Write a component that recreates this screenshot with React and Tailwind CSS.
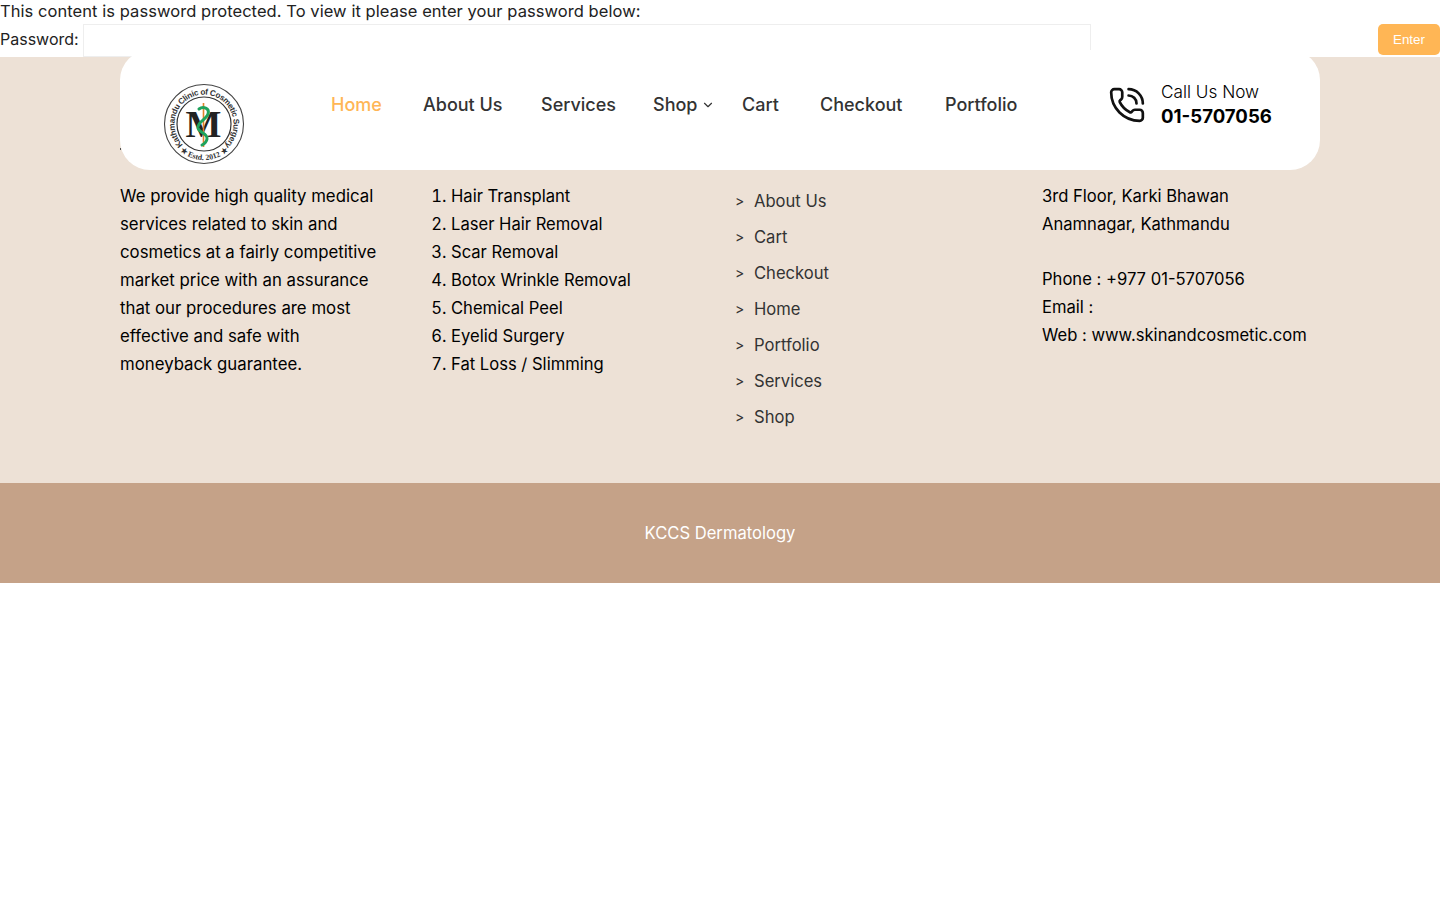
import { ChevronDown, PhoneCall } from 'lucide-react'

const font = { fontFamily: 'Inter, sans-serif' }

const navLinks = [
  { label: 'Home', width: 'w-[92px]', active: true },
  { label: 'About Us', width: 'w-[118px]' },
  { label: 'Services', width: 'w-[112px]' },
  { label: 'Shop', width: 'w-[89px]', caret: true },
  { label: 'Cart', width: 'w-[78px]' },
  { label: 'Checkout', width: 'w-[125px]' },
  { label: 'Portfolio', width: 'w-[80px]' },
]

const treatments = [
  'Hair Transplant',
  'Laser Hair Removal',
  'Scar Removal',
  'Botox Wrinkle Removal',
  'Chemical Peel',
  'Eyelid Surgery',
  'Fat Loss / Slimming',
]

const pages = ['About Us', 'Cart', 'Checkout', 'Home', 'Portfolio', 'Services', 'Shop']

function Logo() {
  return (
    <svg width="82" height="82" viewBox="0 0 82 82" className="block">
      <defs>
        <path id="ring-top" d="M20.1 61.9 A29.5 29.5 0 1 1 61.9 61.9" />
        <path id="ring-bottom" d="M15.5 66.5 A36 36 0 0 0 66.5 66.5" />
      </defs>
      <circle cx="41" cy="41" r="39.5" fill="none" stroke="#444" strokeWidth="1.1" />
      <circle cx="41" cy="41" r="27" fill="none" stroke="#333" strokeWidth="1.2" />
      <text fontSize="8.2" fontWeight="700" fill="#333" fontFamily="Liberation Sans, sans-serif">
        <textPath href="#ring-top" textLength="139" lengthAdjust="spacing">Kathmandu Clinic of Cosmetic Surgery</textPath>
      </text>
      <text fontSize="7.8" fontWeight="700" fill="#333" fontFamily="Liberation Serif, serif" textAnchor="middle">
        <textPath href="#ring-bottom" startOffset="50%">★ Estd. 2012 ★</textPath>
      </text>
      <text x="40.5" y="54" textAnchor="middle" fontSize="38" fontWeight="700" fill="#222" fontFamily="Liberation Serif, serif">M</text>
      <line x1="40.5" y1="20" x2="40.5" y2="64" stroke="#e0812b" strokeWidth="1.6" />
      <path d="M36 26 c4 -3 11 -1 9 5 c-2 6 -11 8 -10 14 c1 5 10 5 9 11 c-.5 3 -3 5 -5 6" fill="none" stroke="#1fa35c" strokeWidth="3" strokeLinecap="round" />
    </svg>
  )
}

export default function App() {
  return (
    <div className="relative min-h-[900px] bg-white text-[#222]" style={font}>
      <div className="mb-[2px] text-[16.5px] leading-[22px] tracking-[0.06px]">
        This content is password protected. To view it please enter your password below:
      </div>
      <form className="flex h-[33px] items-start justify-between">
        <label className="flex items-start text-[16px] leading-[30px]">
          <span className="w-[83px]">Password:</span>
          <input type="password" className="h-[33px] w-[1008px] border border-[#eeeeee] bg-white" />
        </label>
        <button type="button" className="h-[31px] w-[62px] rounded-[5px] bg-[#ffb655] text-[13.33px] text-white" style={{ fontFamily: 'Liberation Sans, sans-serif' }}>
          Enter
        </button>
      </form>

      <span className="absolute left-[120px] top-[148px] h-[2px] w-[1px] bg-[#555]" />

      <header className="absolute left-[120px] top-[50px] z-10 flex h-[120px] w-[1200px] items-start rounded-[30px] bg-white">
        <div className="ml-[43px] mt-[33px] w-[168px] shrink-0">
          <Logo />
        </div>
        <nav className="mt-[42px] flex items-center text-[18px] font-medium leading-[26px] text-[#333]">
          {navLinks.map((link) => (
            <a key={link.label} className={`flex items-center whitespace-nowrap ${link.width} ${link.active ? 'text-[#ffb655]' : ''}`}>
              {link.label}
              {link.caret && <ChevronDown size={14} strokeWidth={2} className="ml-[4px]" />}
            </a>
          ))}
        </nav>
        <div className="absolute left-[988px] top-[30px] flex items-center">
          <PhoneCall size={38} strokeWidth={1.7} className="mt-[2px] text-[#111]" />
          <div className="ml-[15px] text-black">
            <div className="text-[17.2px] font-light leading-[24px]">Call Us Now</div>
            <div className="text-[18.6px] font-bold leading-[24px]">01-5707056</div>
          </div>
        </div>
      </header>

      <footer>
        <div className="h-[426px] bg-[#ede1d6] pt-[125px]">
          <div className="mx-auto grid w-[1200px] grid-cols-[306px_310px_306px_278px] text-[16.6px] leading-[28px] text-black">
            <p className="text-[16.8px]">
              We provide high quality medical<br />
              services related to skin and<br />
              cosmetics at a fairly competitive<br />
              market price with an assurance<br />
              that our procedures are most<br />
              effective and safe with<br />
              moneyback guarantee.
            </p>
            <ol className="list-decimal pl-[25px]">
              {treatments.map((item) => (
                <li key={item}>{item}</li>
              ))}
            </ol>
            <ul className="pt-[5px] text-[#333]">
              {pages.map((page) => (
                <li key={page} className="mb-[8px] flex items-center">
                  <span className="ml-[-1px] w-[19px] text-[14px]">&gt;</span>
                  {page}
                </li>
              ))}
            </ul>
            <div>
              3rd Floor, Karki Bhawan<br />
              Anamnagar, Kathmandu
              <div className="mt-[27px]">Phone : +977 01-5707056</div>
              <div>Email :</div>
              <div>Web : www.skinandcosmetic.com</div>
            </div>
          </div>
        </div>
        <div className="flex h-[100px] items-center justify-center bg-[#c5a288] text-[16.6px] text-white">
          KCCS Dermatology
        </div>
      </footer>
    </div>
  )
}
